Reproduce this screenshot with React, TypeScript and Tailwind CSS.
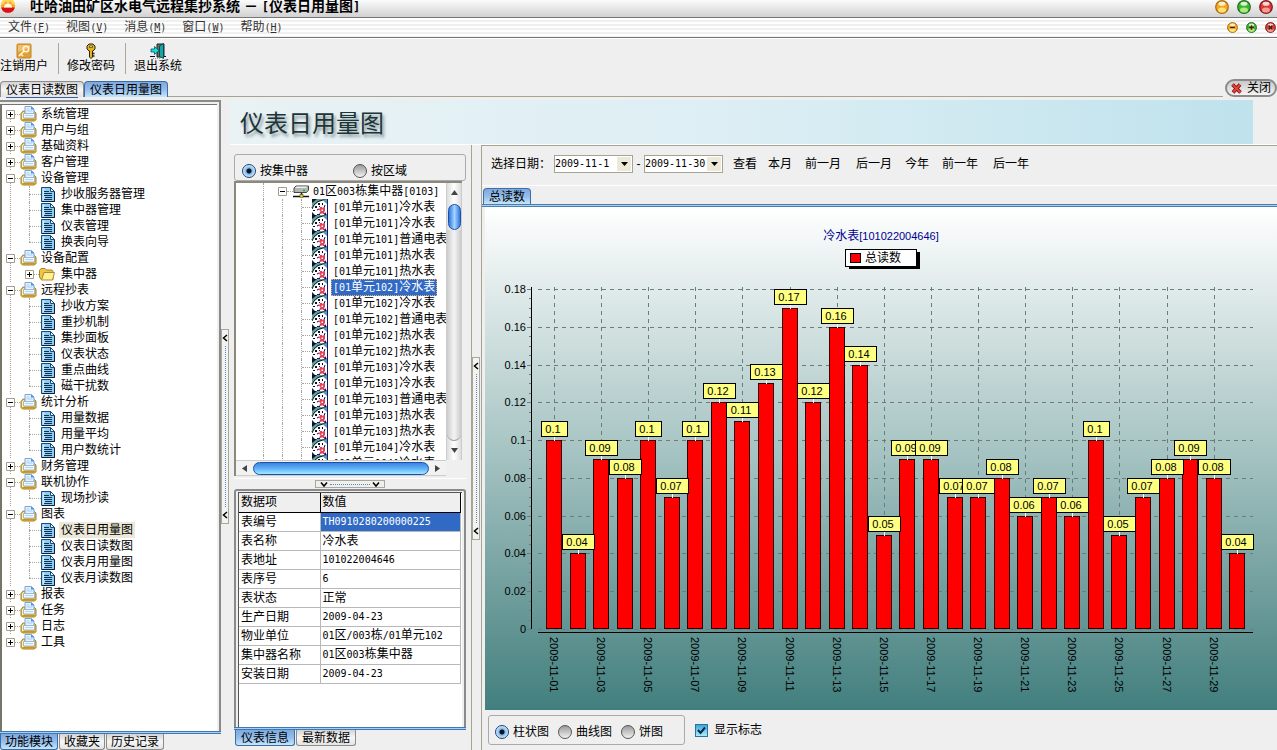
import { Fragment, useState, type ReactNode } from "react";

const readings = [
  0.1, 0.04, 0.09, 0.08, 0.1, 0.07, 0.1, 0.12, 0.11, 0.13, 0.17, 0.12, 0.16, 0.14, 0.05,
  0.09, 0.09, 0.07, 0.07, 0.08, 0.06, 0.07, 0.06, 0.1, 0.05, 0.07, 0.08, 0.09, 0.08, 0.04,
];

type Branch = { name: string; state: "open" | "closed"; leaves?: string[]; folder?: string };

const branches: Branch[] = [
  { name: "系统管理", state: "closed" },
  { name: "用户与组", state: "closed" },
  { name: "基础资料", state: "closed" },
  { name: "客户管理", state: "closed" },
  { name: "设备管理", state: "open", leaves: ["抄收服务器管理", "集中器管理", "仪表管理", "换表向导"] },
  { name: "设备配置", state: "open", folder: "集中器" },
  { name: "远程抄表", state: "open", leaves: ["抄收方案", "重抄机制", "集抄面板", "仪表状态", "重点曲线", "磁干扰数"] },
  { name: "统计分析", state: "open", leaves: ["用量数据", "用量平均", "用户数统计"] },
  { name: "财务管理", state: "closed" },
  { name: "联机协作", state: "open", leaves: ["现场抄读"] },
  { name: "图表", state: "open", leaves: ["仪表日用量图", "仪表日读数图", "仪表月用量图", "仪表月读数图"] },
  { name: "报表", state: "closed" },
  { name: "任务", state: "closed" },
  { name: "日志", state: "closed" },
  { name: "工具", state: "closed" },
];

const meters = [
  "[01单元101]冷水表", "[01单元101]冷水表", "[01单元101]普通电表", "[01单元101]热水表", "[01单元101]热水表",
  "[01单元102]冷水表", "[01单元102]冷水表", "[01单元102]普通电表", "[01单元102]热水表", "[01单元102]热水表",
  "[01单元103]冷水表", "[01单元103]冷水表", "[01单元103]普通电表", "[01单元103]热水表", "[01单元103]热水表",
  "[01单元104]冷水表", "[01单元104]冷水表",
];

const details = [
  ["表编号", "TH0910280200000225"],
  ["表名称", "冷水表"],
  ["表地址", "101022004646"],
  ["表序号", "6"],
  ["表状态", "正常"],
  ["生产日期", "2009-04-23"],
  ["物业单位", "01区/003栋/01单元102"],
  ["集中器名称", "01区003栋集中器"],
  ["安装日期", "2009-04-23"],
];

/** Sets Latin runs in a half-width face so that two of them fill one Chinese cell. */
function Mixed({ children }: { children: string }) {
  return (
    <>
      {children.split(/([\x21-\x7e]+)/).map((run, i) =>
        i % 2 ? (
          <span key={i} className="font-['DejaVu_Sans_Mono',monospace] text-[10px]">{run}</span>
        ) : (
          <Fragment key={i}>{run}</Fragment>
        ),
      )}
    </>
  );
}

function Logo() {
  return (
    <svg className="h-[15px] w-4 shrink-0" viewBox="0 0 16 15" aria-hidden="true">
      <circle cx="8" cy="6" r="7" fill="#f2a51e" />
      <path d="M1 5a7 7 0 0 1 14 0l-3-1-2-3-2 3-2-3-2 3z" fill="#ffd65a" />
      <path d="M1.200 7.500h13.600a7 7 0 0 1-13.600 0z" fill="#d8101c" />
      <path d="M4 7.500a4 4 0 0 1 8 0z" fill="#fff7e8" />
    </svg>
  );
}

function Orb({ tone, sign, small }: { tone: "amber" | "green" | "red"; sign?: string; small?: boolean }) {
  const fill = { amber: ["#a86a10", "#f5a81c", "#fff08a"], green: ["#1f6e1c", "#3fb52c", "#c4f79a"], red: ["#7e1a1c", "#dc3a38", "#ffb5a8"] }[tone];
  return (
    <svg className={small ? "size-[11px]" : "size-[14px]"} viewBox="0 0 14 14" aria-hidden="true">
      <circle cx="7" cy="7" r="6.300" fill={fill[1]} stroke={fill[0]} strokeWidth="1.200" />
      <ellipse cx="7" cy="10" rx="4" ry="2.600" fill={fill[2]} opacity=".8" />
      <ellipse cx="7" cy="3.800" rx="3.500" ry="2" fill="#fff" opacity=".8" />
      {sign && <path d={sign} stroke="#4a1c08" strokeWidth="2" />}
    </svg>
  );
}

function LogoutIcon() {
  return (
    <svg className="size-4" viewBox="0 0 16 16" aria-hidden="true">
      <rect x="1" y="1" width="14" height="14" rx="1" fill="#e0a038" stroke="#c58425" />
      <path d="M2 2h12v3L2 9z" fill="#f0c070" />
      <circle cx="10" cy="6" r="2.700" fill="none" stroke="#fff5d8" strokeWidth="1.600" />
      <path d="M8 8l-5 5M5 11l2 2" stroke="#fff5d8" strokeWidth="1.600" />
    </svg>
  );
}

function KeyIcon() {
  return (
    <svg className="size-4" viewBox="0 0 16 16" aria-hidden="true">
      <path d="M6 1h4l2 2v3l-2 2H9.500v6L8 15.500 6.500 14V8H6L4 6V3z" fill="#e3b420" stroke="#2c2204" />
      <path d="M6.500 3h3v1.500h-3z" fill="#fff" stroke="#2c2204" strokeWidth=".6" />
      <path d="M9.500 10.500h2M9.500 13h2" stroke="#2c2204" strokeWidth="1.400" />
    </svg>
  );
}

function ExitIcon() {
  return (
    <svg className="size-4" viewBox="0 0 16 16" aria-hidden="true">
      <path d="M7 1h7v13H7z" fill="#6b6b6b" stroke="#222" />
      <path d="M9.500 3l4-2.500v15l-4-2z" fill="#16a7a5" stroke="#053c3c" strokeWidth=".8" />
      <path d="M0 13.500h5M14 13.500h2" stroke="#111" />
      <path d="M3 15.500h7" stroke="#999" strokeDasharray="1 1" />
      <path d="M1 6h3.500V3.500L9 7.500 4.500 11.500V9H1z" fill="#18dfe2" stroke="#055" strokeWidth=".8" />
    </svg>
  );
}

function BinderIcon() {
  return (
    <svg className="relative h-4 w-[17px] shrink-0" viewBox="0 0 17 16" aria-hidden="true">
      <path d="M1 7.500L3 5h10.500l2.500 2v6.500L14.500 15h-12L1 13.500z" fill="#e3b93f" stroke="#a5812a" />
      <path d="M2 7.500L4 5.500v8H2z" fill="#fff1a8" />
      <path d="M5 .5h6.500L14 3v6H5z" fill="#e6f2ff" stroke="#7aa6d8" />
      <path d="M11 .5V3.500h3z" fill="#3f8de0" />
      <path d="M6.500 3h3M6.500 5h6" stroke="#a6c9ef" />
      <path d="M3.500 7.500h11V12h-11z" fill="#f3f8ff" stroke="#9db8d8" />
      <path d="M5 9.500h8" stroke="#b5d2f4" />
      <path d="M2.500 13.500h12" stroke="#c69420" />
    </svg>
  );
}

function SheetIcon() {
  return (
    <svg className="relative h-[15px] w-[14px] shrink-0" viewBox="0 0 14 15" aria-hidden="true">
      <path d="M.5.500h9l4 4v10H.500z" fill="#8accf4" stroke="#1b4a78" />
      <path d="M1.500 1.500h2v12h-2z" fill="#c6ebff" />
      <path d="M9.500.500v4h4z" fill="#d9f1ff" stroke="#1b4a78" />
      <path d="M3 4.500h5M3 6.500h8M3 8.500h8M4 10.500h7M3 12.500h8" stroke="#12304f" />
      <path d="M1 14.500h12.500V5" fill="none" stroke="#0c2138" />
    </svg>
  );
}

function FolderIcon() {
  return (
    <svg className="relative h-[14px] w-4 shrink-0" viewBox="0 0 16 14" aria-hidden="true">
      <path d="M.5 3.500L2 1.500h4l1.500 1.500H13l1 1.500v8H2L.500 10z" fill="#edc548" stroke="#a98424" />
      <path d="M2.500 13L5 5.500h10.500L13.500 13z" fill="#fff09a" stroke="#b08b26" />
    </svg>
  );
}

function ConcentratorIcon() {
  return (
    <svg className="h-[13px] w-[17px] shrink-0" viewBox="0 0 17 13" aria-hidden="true">
      <path d="M1 3l2-2h12.500v4L13.500 7.500H1z" fill="#b5b5b5" stroke="#444" />
      <path d="M2 3l1.500-1.500h11L13 3z" fill="#eee" />
      <path d="M10 5.500h2" stroke="#22b322" strokeWidth="1.500" />
      <path d="M8.500 8v3M0 11.500h7M10 11.500h6" stroke="#111" strokeWidth="1.500" />
      <rect x="7" y="9.500" width="3" height="3" fill="#e2cf36" stroke="#5c530e" strokeWidth=".6" />
    </svg>
  );
}

function MeterIcon() {
  return (
    <svg className="relative size-4 shrink-0" viewBox="0 0 16 16" aria-hidden="true">
      <path d="M0 0h16v16H0z" fill="#fff" />
      <path d="M0 0h15L7 2.500 2 6 0 10z" fill="#5aa3a3" />
      <path d="M0 0h5L0 4z" fill="#111" />
      <path d="M0 10l2-4 4-3.500L11 1h4" fill="none" stroke="#111" />
      <path d="M10 1l5 4V1z" fill="#5aa3a3" />
      <path d="M15.500 0v16" stroke="#15157c" />
      <path d="M3 7h2v2H3zM6 4h2v2H6zM10 4h1v2h-1zM1 11h2v1H1z" fill="#111" />
      <path d="M7 7l2 2M13 6l-1 3M5 11l2-1" stroke="#15157c" />
      <path d="M8 8h2l1 1.500L12 8h1v4l-1 1 1 2h-2l-1-1-1 1H7l1.500-3L7 11z" fill="#e0405a" />
      <path d="M9.500 10.500h1.500v1.500H9.500z" fill="#fff" />
      <path d="M0 13l3 3H0zM5 15h3v1H5zM13 13l2 3h-3z" fill="#15157c" />
    </svg>
  );
}

function Toggle({ open }: { open: boolean }) {
  return (
    <svg className="relative size-[9px] shrink-0" viewBox="0 0 9 9" aria-hidden="true">
      <path d="M.5.500h8v8h-8z" fill="#fff" stroke="#a09e8c" />
      <path d={open ? "M2 4.500h5" : "M2 4.500h5M4.500 2v5"} stroke="#000" />
    </svg>
  );
}

const dotsDown = "shrink-0 border-l border-dotted border-[#a8a698]";
const dotsAcross = "shrink-0 border-t border-dotted border-[#a8a698]";

function ModuleTree() {
  return (
    <ul className="pl-1 pt-px">
      {branches.map((b, i) => (
        <li key={b.name} className="relative">
          {i < branches.length - 1 && <i className={`absolute bottom-0 left-1 top-2 ${dotsDown}`} />}
          <div className="flex h-4 items-center">
            <Toggle open={b.state === "open"} />
            <i className={`w-[5px] ${dotsAcross}`} />
            <BinderIcon />
            <a href="#" className="pl-1 leading-4">{b.name}</a>
          </div>
          {b.folder && (
            <div className="flex h-4 items-center pl-[19px]">
              <Toggle open={false} />
              <i className={`w-[5px] ${dotsAcross}`} />
              <FolderIcon />
              <a href="#" className="pl-[6px] leading-4">{b.folder}</a>
            </div>
          )}
          {b.leaves?.map((leaf, k) => (
            <div key={leaf} className="relative flex h-4 items-center pl-[23px]">
              <i className={`absolute left-[23px] top-0 ${k === b.leaves!.length - 1 ? "h-2" : "h-4"} ${dotsDown}`} />
              <i className={`w-3 ${dotsAcross}`} />
              <SheetIcon />
              <a href="#" className={`ml-1 px-[2px] leading-4 ${leaf === "仪表日用量图" ? "bg-[#ece9d8]" : ""}`}>{leaf}</a>
            </div>
          ))}
        </li>
      ))}
    </ul>
  );
}

function MeterTree() {
  return (
    <div className="relative min-w-0 flex-1 overflow-hidden bg-white">
      <div className="flex h-4 items-center">
        <i className={`ml-[27px] h-4 w-[15px] ${dotsDown}`} />
        <Toggle open />
        <i className={`w-[6px] ${dotsAcross}`} />
        <ConcentratorIcon />
        <a href="#" className="whitespace-nowrap pl-[3px] leading-4"><Mixed>01区003栋集中器[0103]</Mixed></a>
      </div>
      {meters.map((m, i) => (
        <div key={i} className="flex h-4 items-center">
          <i className={`ml-[27px] h-4 w-[19px] ${dotsDown}`} />
          <i className={`h-4 w-[19px] ${dotsDown}`} />
          <i className={`h-4 ${dotsDown}`} />
          <i className={`w-[10px] ${dotsAcross}`} />
          <MeterIcon />
          <a
            href="#"
            className={`ml-[3px] whitespace-nowrap px-[2px] leading-4 ${i === 5 ? "bg-[#316ac5] text-white outline-1 -outline-offset-1 outline-dotted outline-[#e0b070]" : ""}`}
          >
            <Mixed>{m}</Mixed>
          </a>
        </div>
      ))}
    </div>
  );
}

function Tab({ children, active, bottom, dense, underline }: { children: ReactNode; active?: boolean; bottom?: boolean; dense?: boolean; underline?: boolean }) {
  return (
    <button
      type="button"
      className={`h-4 whitespace-nowrap border leading-[14px] ${dense ? "px-1" : "px-[5px]"} ${bottom ? "rounded-b-[3px] border-t-0" : "rounded-t-[4px] border-b-0"} ${
        active
          ? "border-[#3e6da6] bg-linear-to-b from-[#7ea9dd] via-[#94bdec] to-[#c4e6fb]"
          : "border-[#8c8c8c] bg-linear-to-b from-[#d4d4d4] via-[#f6f6f6] to-[#e4e4e4]"
      }`}
    >
      <span className={underline ? "border-b border-[#3a5f9c]" : ""}>{children}</span>
    </button>
  );
}

function Radio({ name, label, checked }: { name: string; label: string; checked?: boolean }) {
  return (
    <label className="flex items-center gap-1 whitespace-nowrap">
      <input
        type="radio"
        name={name}
        defaultChecked={checked}
        className="size-[14px] appearance-none rounded-full border border-[#555] bg-linear-to-b from-[#9b9b9b] to-[#f2f2f2] checked:border-[#1d4272] checked:bg-[radial-gradient(circle,#0a1420_0_2px,#7db4ea_3px,#cdeaff_6px)]"
      />
      {label}
    </label>
  );
}

function Arrow({ d, className }: { d: string; className: string }) {
  return (
    <svg className={className} viewBox="0 0 8 8" aria-hidden="true">
      <path d={d} fill="none" stroke="#000" strokeWidth="1.500" />
    </svg>
  );
}

function SideHandle() {
  return (
    <button type="button" aria-label="折叠" className="flex w-2 flex-col items-center justify-between border border-[#a9a797] bg-[#f3f3f1] py-1">
      <Arrow d="M6 1L2.500 4 6 7" className="size-2" />
      <span className="my-1 flex-1 border-l border-dotted border-[#5a86c8]" />
      <Arrow d="M6 1L2.500 4 6 7" className="size-2" />
    </button>
  );
}

function DateBox({ value, label }: { value: string; label: string }) {
  return (
    <span className="flex h-[18px] w-[79px] border border-[#a5a392] bg-white py-px pr-px">
      <input aria-label={label} defaultValue={value} className="w-0 min-w-0 flex-1 font-['DejaVu_Sans_Mono',monospace] text-[10px] outline-none" />
      <button type="button" aria-label={`${label}选择`} className="flex w-[14px] items-center justify-center bg-[#ece9d8]">
        <svg className="h-1 w-[7px]" viewBox="0 0 7 4" aria-hidden="true"><path d="M0 0h7L3.500 4z" /></svg>
      </button>
    </span>
  );
}

function Chart({ marks }: { marks: boolean }) {
  const y = (v: number) => Math.round(422 - (v / 0.18) * 340);
  const x = (i: number) => Math.round(69 + i * 23.56);
  const ticks = Array.from({ length: 10 }, (_, i) => i * 0.02);
  const minor = Array.from({ length: 37 }, (_, i) => i * 0.005);
  return (
    <svg className="absolute inset-0 size-full" viewBox="0 0 792 503" role="img" aria-label="冷水表日用量" shapeRendering="crispEdges" fontFamily="'Liberation Sans','Noto Sans CJK SC',sans-serif" fontSize="11">
      <text x="396" y="33" textAnchor="middle" fill="#000090" fontSize="11">
        <tspan fontSize="12">冷水表</tspan>[101022004646]
      </text>
      <rect x="364" y="45" width="71" height="17" fill="#000" />
      <rect x="360.500" y="42.500" width="71" height="17" fill="#fff" stroke="#000" />
      <rect x="365.500" y="46.500" width="10" height="9" fill="#f00" stroke="#000" />
      <text x="380" y="55" fontSize="12">总读数</text>

      <g stroke="#6b7c7b" strokeDasharray="4 4">
        {ticks.map((t) => <path key={t} d={`M53 ${y(t) + 0.5}H768`} />)}
        {readings.map((_, i) => i % 2 === 0 && <path key={i} d={`M${x(i) + 0.5} 80V421`} />)}
      </g>
      <g stroke="#6b7c7b">
        {minor.map((t) => <path key={t} d={`M44 ${y(t) + 0.5}h2`} />)}
        {ticks.map((t) => <path key={t} d={`M42 ${y(t) + 0.5}h4`} />)}
      </g>
      <path d="M46.500 80V422M53 425.500H768" stroke="#000" fill="none" />
      {ticks.map((t) => (
        <text key={t} x="41" y={y(t) + 4} textAnchor="end">{Number(t.toFixed(2))}</text>
      ))}

      {readings.map((v, i) => (
        <rect key={i} x={x(i) - 7.5} y={y(v) + 0.5} width="15" height={421 - y(v)} fill="#f00" stroke="#300" />
      ))}
      {marks && readings.map((v, i) => {
        const w = v === 0.1 ? 26 : 32;
        return (
          <g key={i}>
            <path d={`M${x(i) + 0.5} ${y(v) - 3}v4`} stroke="#fff" />
            <rect x={x(i) - w / 2 + 0.5} y={y(v) - 18.5} width={w} height="15" fill="#ffff80" stroke="#000" />
            <text x={x(i) - 1} y={y(v) - 7} textAnchor="middle">{v}</text>
          </g>
        );
      })}
      {readings.map((_, i) => i % 2 === 0 && (
        <text key={i} transform={`translate(${x(i) - 4} 430) rotate(90)`}>
          {`2009-11-${String(i + 1).padStart(2, "0")}`}
        </text>
      ))}
    </svg>
  );
}

const stripes = "bg-[repeating-linear-gradient(180deg,#ffffff_0_2px,#f0f0f0_2px_4px)]";

export default function App() {
  const [marks, setMarks] = useState(true);
  return (
    <div className="flex min-h-screen flex-col overflow-hidden bg-[#efefef] font-['Liberation_Sans','Noto_Sans_CJK_SC',sans-serif] text-xs text-black">
      <header>
        <div className="flex h-[18px] items-start justify-between overflow-hidden border-b border-[#777] bg-linear-to-b from-[#fbfbfb] to-[#d2d2d2]">
          <h1 className="flex items-start gap-[14px] whitespace-nowrap text-sm font-bold leading-[13px]">
            <Logo />
            <span>
              吐哈油田矿区水电气远程集抄系统 － <span className="font-['DejaVu_Sans_Mono',monospace] text-xs leading-[13px]">[</span>仪表日用量图<span className="font-['DejaVu_Sans_Mono',monospace] text-xs leading-[13px]">]</span>
            </span>
          </h1>
          <div className="flex gap-2 pr-1">
            <button type="button" aria-label="最小化"><Orb tone="amber" /></button>
            <button type="button" aria-label="最大化"><Orb tone="green" /></button>
            <button type="button" aria-label="退出"><Orb tone="red" /></button>
          </div>
        </div>
        <nav className={`flex h-5 items-center justify-between border-b border-[#777] ${stripes}`}>
          <div className="flex gap-4 pl-2 text-[#333]">
            {[["文件", "F"], ["视图", "V"], ["消息", "M"], ["窗口", "W"], ["帮助", "H"]].map(([t, k]) => (
              <button type="button" key={k} className="whitespace-nowrap leading-4">
                {t}<span className="font-['DejaVu_Sans_Mono',monospace] text-[10px]">(<u>{k}</u>)</span>
              </button>
            ))}
          </div>
          <div className="flex gap-2 pr-px">
            <button type="button" aria-label="还原"><Orb tone="amber" small sign="M4 7h6" /></button>
            <button type="button" aria-label="放大"><Orb tone="green" small sign="M4 7h6M7 4v6" /></button>
            <button type="button" aria-label="关闭窗口"><Orb tone="red" small sign="M4.500 4.500l5 5M9.500 4.500l-5 5" /></button>
          </div>
        </nav>
        <div className="flex h-[41px] items-start border-t border-white pt-1">
          {[["注销用户", <LogoutIcon />], ["修改密码", <KeyIcon />], ["退出系统", <ExitIcon />]].map(([t, icon], i) => (
            <button key={i} type="button" className={`flex h-[31px] flex-col items-center whitespace-nowrap leading-[14px] ${i ? "border-l border-[#aaa89a] pl-2 pr-[10px]" : "pr-[10px]"}`}>
              {icon}{t}
            </button>
          ))}
        </div>
        <div className="flex h-[18px] items-end">
          <div className="flex items-end"><Tab underline>仪表日读数图</Tab><Tab active>仪表日用量图</Tab></div>
          <div className="h-px flex-1 bg-[#a5a392]" />
          <button type="button" className="ml-[2px] flex h-[18px] w-[52px] items-center justify-center gap-[5px] whitespace-nowrap rounded-full border-2 border-[#8b8b8b] bg-linear-to-b from-[#c9c9c9] to-[#f4f4f4]">
            <svg className="size-[11px]" viewBox="0 0 11 11" aria-hidden="true">
              <path d="M1.500 1.500l8 8M9 1.500L2 9.500" stroke="#5e0c0c" strokeWidth="3.500" />
              <path d="M1.500 1.500l8 8M9 1.500L2 9.500" stroke="#ee4038" strokeWidth="2" />
            </svg>
            关闭
          </button>
        </div>
      </header>

      <main className="flex min-h-0 flex-1 pt-[3px]">
        <aside className="flex w-[221px] shrink-0 flex-col">
          <div className="flex flex-1 flex-col border-r-2 border-t-2 border-[#8a8a8a] pr-[2px] pt-[2px]">
            <div className="flex-1 border-l-2 border-t border-[#77756a] bg-white"><ModuleTree /></div>
          </div>
          <div className="h-[3px] border-y border-[#3f79b5] bg-[#a8d0f5]" />
          <div className="flex h-4 gap-px"><Tab active bottom dense>功能模块</Tab><Tab bottom dense>收藏夹</Tab><Tab bottom dense>历史记录</Tab></div>
        </aside>
        <div className="flex w-[9px] shrink-0 flex-col">
          <div className="flex-[229]" />
          <div className="flex flex-[195]"><SideHandle /></div>
          <div className="flex-[226]" />
        </div>

        <div className="flex min-w-0 flex-1 flex-col">
          <div className="mr-6 flex h-11 items-center bg-linear-to-r from-[#e9f2f5] via-[#dceef4] to-[#bfe2ed] pl-[10px] pt-1">
            <h2 className="font-['Liberation_Serif','Noto_Sans_CJK_SC',serif] text-2xl leading-none text-[#1d3537] [text-shadow:2px_3px_3px_#8a999d]">仪表日用量图</h2>
          </div>
          <div className="flex min-h-0 flex-1 border-t border-white">
            <section className="flex w-[242px] shrink-0 flex-col border-r border-[#a5a392] pb-1 pl-1 pr-[5px] pt-[9px]">
              <fieldset className="flex h-[27px] items-center rounded-[3px] border border-[#aaa] pl-[7px] pt-2">
                <div className="w-[111px]"><Radio name="group" label="按集中器" checked /></div>
                <Radio name="group" label="按区域" />
              </fieldset>
              <div className="mr-1 h-[295px] border-l-2 border-t-2 border-[#8b897c]">
                <div className="flex h-[277px]">
                  <MeterTree />
                  <div className="flex w-4 shrink-0 flex-col items-center border-x border-[#ccc] bg-linear-to-r from-[#ddd] via-white to-[#ddd]">
                    <svg className="my-[7px] h-[5px] w-[7px]" viewBox="0 0 7 5" aria-hidden="true"><path d="M0 5h7L3.500 0z" fill="#444" /></svg>
                    <div className="mt-[2px] h-[26px] w-[13px] rounded-full border border-[#1b4fa8] bg-linear-to-r from-[#2f76e0] via-[#a5d5ff] to-[#2f76e0]" />
                    <div className="w-[14px] flex-1 rounded-b-full border-b border-[#999] bg-linear-to-r from-[#ccc] via-[#f4f4f4] to-[#ccc]" />
                    <svg className="my-[7px] h-[5px] w-[7px]" viewBox="0 0 7 5" aria-hidden="true"><path d="M0 0h7L3.500 5z" fill="#444" /></svg>
                  </div>
                </div>
                <div className="mr-4 flex h-4 items-center border-y border-[#ccc] bg-[#f2f2f2]">
                  <svg className="mx-[6px] h-[7px] w-[5px]" viewBox="0 0 5 7" aria-hidden="true"><path d="M5 0v7L0 3.500z" fill="#444" /></svg>
                  <div className="h-[13px] flex-1 rounded-full border border-[#1b4fa8] bg-linear-to-b from-[#3c84dc] via-[#5fb0fb] to-[#a2eaff]" />
                  <svg className="mx-[6px] h-[7px] w-[5px]" viewBox="0 0 5 7" aria-hidden="true"><path d="M0 0v7l5-3.500z" fill="#444" /></svg>
                </div>
              </div>
              <div className="mt-[2px] h-px bg-white" />
              <button type="button" aria-label="收起明细" className="mt-px flex h-2 w-[70px] items-center self-center border border-[#a9a797] px-1">
                <Arrow d="M1 2.500L4 6 7 2.500" className="size-2" />
                <span className="mx-[2px] flex-1 border-t border-dotted border-[#5a86c8]" />
                <Arrow d="M1 2.500L4 6 7 2.500" className="size-2" />
              </button>
              <div className="mt-px flex flex-1 flex-col rounded-t-[3px] border-2 border-b-0 border-[#8a8a8a] px-[2px] pt-px">
                <div className="flex-1 border-l border-t border-[#555] bg-white">
                  <table className="w-[222px] table-fixed border-collapse text-left">
                    <thead>
                      <tr className="h-[19px] bg-[#efefef]">
                        <th className="w-[81px] border-b border-r border-black px-[2px] font-normal leading-4">数据项</th>
                        <th className="border border-t-0 border-black px-[2px] font-normal leading-4">数值</th>
                      </tr>
                    </thead>
                    <tbody>
                      {details.map(([k, v], i) => (
                        <tr key={k} className="h-[19px]">
                          <td className="border-b border-r border-[#b8b8b8] px-[2px] leading-4">{k}</td>
                          <td className={`whitespace-nowrap border-b border-r border-[#b8b8b8] px-[2px] leading-4 ${i ? "" : "bg-[#316ac5] text-white"}`}><Mixed>{v}</Mixed></td>
                        </tr>
                      ))}
                    </tbody>
                  </table>
                </div>
              </div>
              <div className="h-[3px] border-y border-[#3f79b5] bg-[#a8d0f5]" />
              <div className="flex h-4 gap-px pl-px"><Tab active bottom>仪表信息</Tab><Tab bottom>最新数据</Tab></div>
            </section>
            <div className="flex w-[9px] shrink-0 flex-col">
              <div className="flex-[212]" />
              <div className="flex flex-[183]"><SideHandle /></div>
              <div className="flex-[210]" />
            </div>

            <section className="flex min-w-0 flex-1 flex-col border-l border-t border-[#a5a392]">
              <form className="flex h-10 items-center whitespace-nowrap border-b border-white pb-[3px] pl-[9px]" onSubmit={(e) => e.preventDefault()}>
                <span className="w-[63px]">选择日期：</span>
                <DateBox label="开始日期" value="2009-11-1" />
                <span className="w-[11px] text-center">-</span>
                <DateBox label="结束日期" value="2009-11-30" />
                <div className="ml-[10px] flex items-center">
                  <button type="button" className="w-[35px] text-left">查看</button>
                  <button type="button" className="w-[37px] text-left">本月</button>
                  <button type="button" className="w-[51px] text-left">前一月</button>
                  <button type="button" className="w-[49px] text-left">后一月</button>
                  <button type="button" className="w-[37px] text-left">今年</button>
                  <button type="button" className="w-[51px] text-left">前一年</button>
                  <button type="button">后一年</button>
                </div>
              </form>
              <div className="flex h-[18px] items-end pl-px"><Tab active>总读数</Tab></div>
              <div className="h-[3px] border-y border-[#4a7db0] bg-[#a8d0f5]" />
              <div className="relative ml-[3px] flex-1 bg-linear-to-b from-white via-[#a3c2c1] to-[#417f7e]"><Chart marks={marks} /></div>
              <div className="flex h-10 items-center gap-[10px] pl-[6px]">
                <fieldset className="flex h-[30px] w-[197px] items-center gap-[9px] rounded-[3px] border border-[#aaa] pl-[6px] pt-1">
                  <Radio name="chart" label="柱状图" checked />
                  <Radio name="chart" label="曲线图" />
                  <Radio name="chart" label="饼图" />
                </fieldset>
                <label className="flex items-center gap-[6px]">
                  <span className="grid size-[13px] place-items-center">
                    <input
                      type="checkbox"
                      checked={marks}
                      onChange={(e) => setMarks(e.target.checked)}
                      className="col-start-1 row-start-1 size-[13px] appearance-none border border-[#2f7397] bg-linear-to-b from-[#3aa8dc] to-[#a8eaff]"
                    />
                    {marks && (
                      <svg className="pointer-events-none col-start-1 row-start-1 size-[9px]" viewBox="0 0 9 9" aria-hidden="true">
                        <path d="M1 4l2.500 3L8 1.500" fill="none" stroke="#052a4a" strokeWidth="2" />
                      </svg>
                    )}
                  </span>
                  显示标志
                </label>
              </div>
            </section>
          </div>
        </div>
      </main>
    </div>
  );
}
